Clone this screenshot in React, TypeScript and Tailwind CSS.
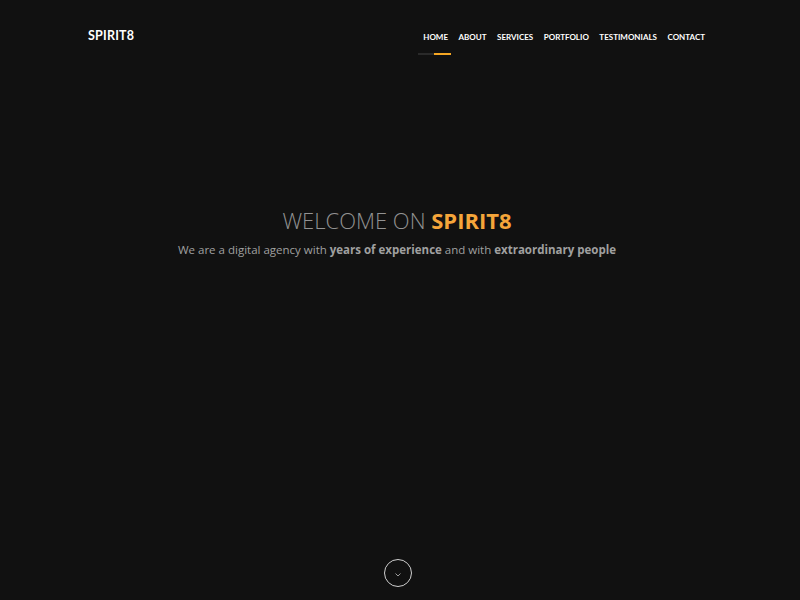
const navItems = ['Home', 'About', 'Services', 'Portfolio', 'Testimonials', 'Contact'];

const App = () => {
  return (
    <div className="w-[800px] h-[600px] bg-[#111111] flex flex-col overflow-hidden">
      {/* Header */}
      <header className="flex items-center justify-between pl-[88px] pr-[95px] h-[74px] font-['Lato',sans-serif]">
        <div className="text-white font-bold text-[12.5px] tracking-[0.2px] -mt-[1px]">SPIRIT8</div>
        <nav className="flex items-center gap-[10.5px]">
          {navItems.map((item, i) => (
            <a key={item} className="relative text-white font-bold text-[8px] uppercase">
              {item}
              {i === 0 && (
                <span className="absolute left-[-5px] top-[22px] flex">
                  <span className="w-[16px] h-[2px] bg-[#2a2a2a]"></span>
                  <span className="w-[17px] h-[2px] bg-[#f5a623]"></span>
                </span>
              )}
            </a>
          ))}
        </nav>
      </header>

      {/* Hero */}
      <section className="flex-1 flex flex-col items-center pr-[6px] font-['Open_Sans',sans-serif]">
        <h1 className="mt-[135px] text-[22px] font-light text-[#929292] leading-none">
          WELCOME ON <span className="font-bold text-[#f5a53a]">SPIRIT8</span>
        </h1>
        <p className="mt-[10px] text-[11.5px] text-[#a0a0a0]">
          We are a digital agency with <b className="font-bold">years of experience</b> and with{' '}
          <b className="font-bold">extraordinary people</b>
        </p>
        <div className="mt-auto mb-[13px] ml-[2px] w-[28px] h-[28px] rounded-full border border-[#cfcfcf] flex items-center justify-center">
          <svg width="8" height="8" viewBox="0 0 8 8" fill="none" stroke="#9a9a9a" strokeWidth="1" className="mt-[4px]">
            <path d="M1.5 2.5 L4 5 L6.5 2.5" />
          </svg>
        </div>
      </section>
    </div>
  );
};

export default App;
